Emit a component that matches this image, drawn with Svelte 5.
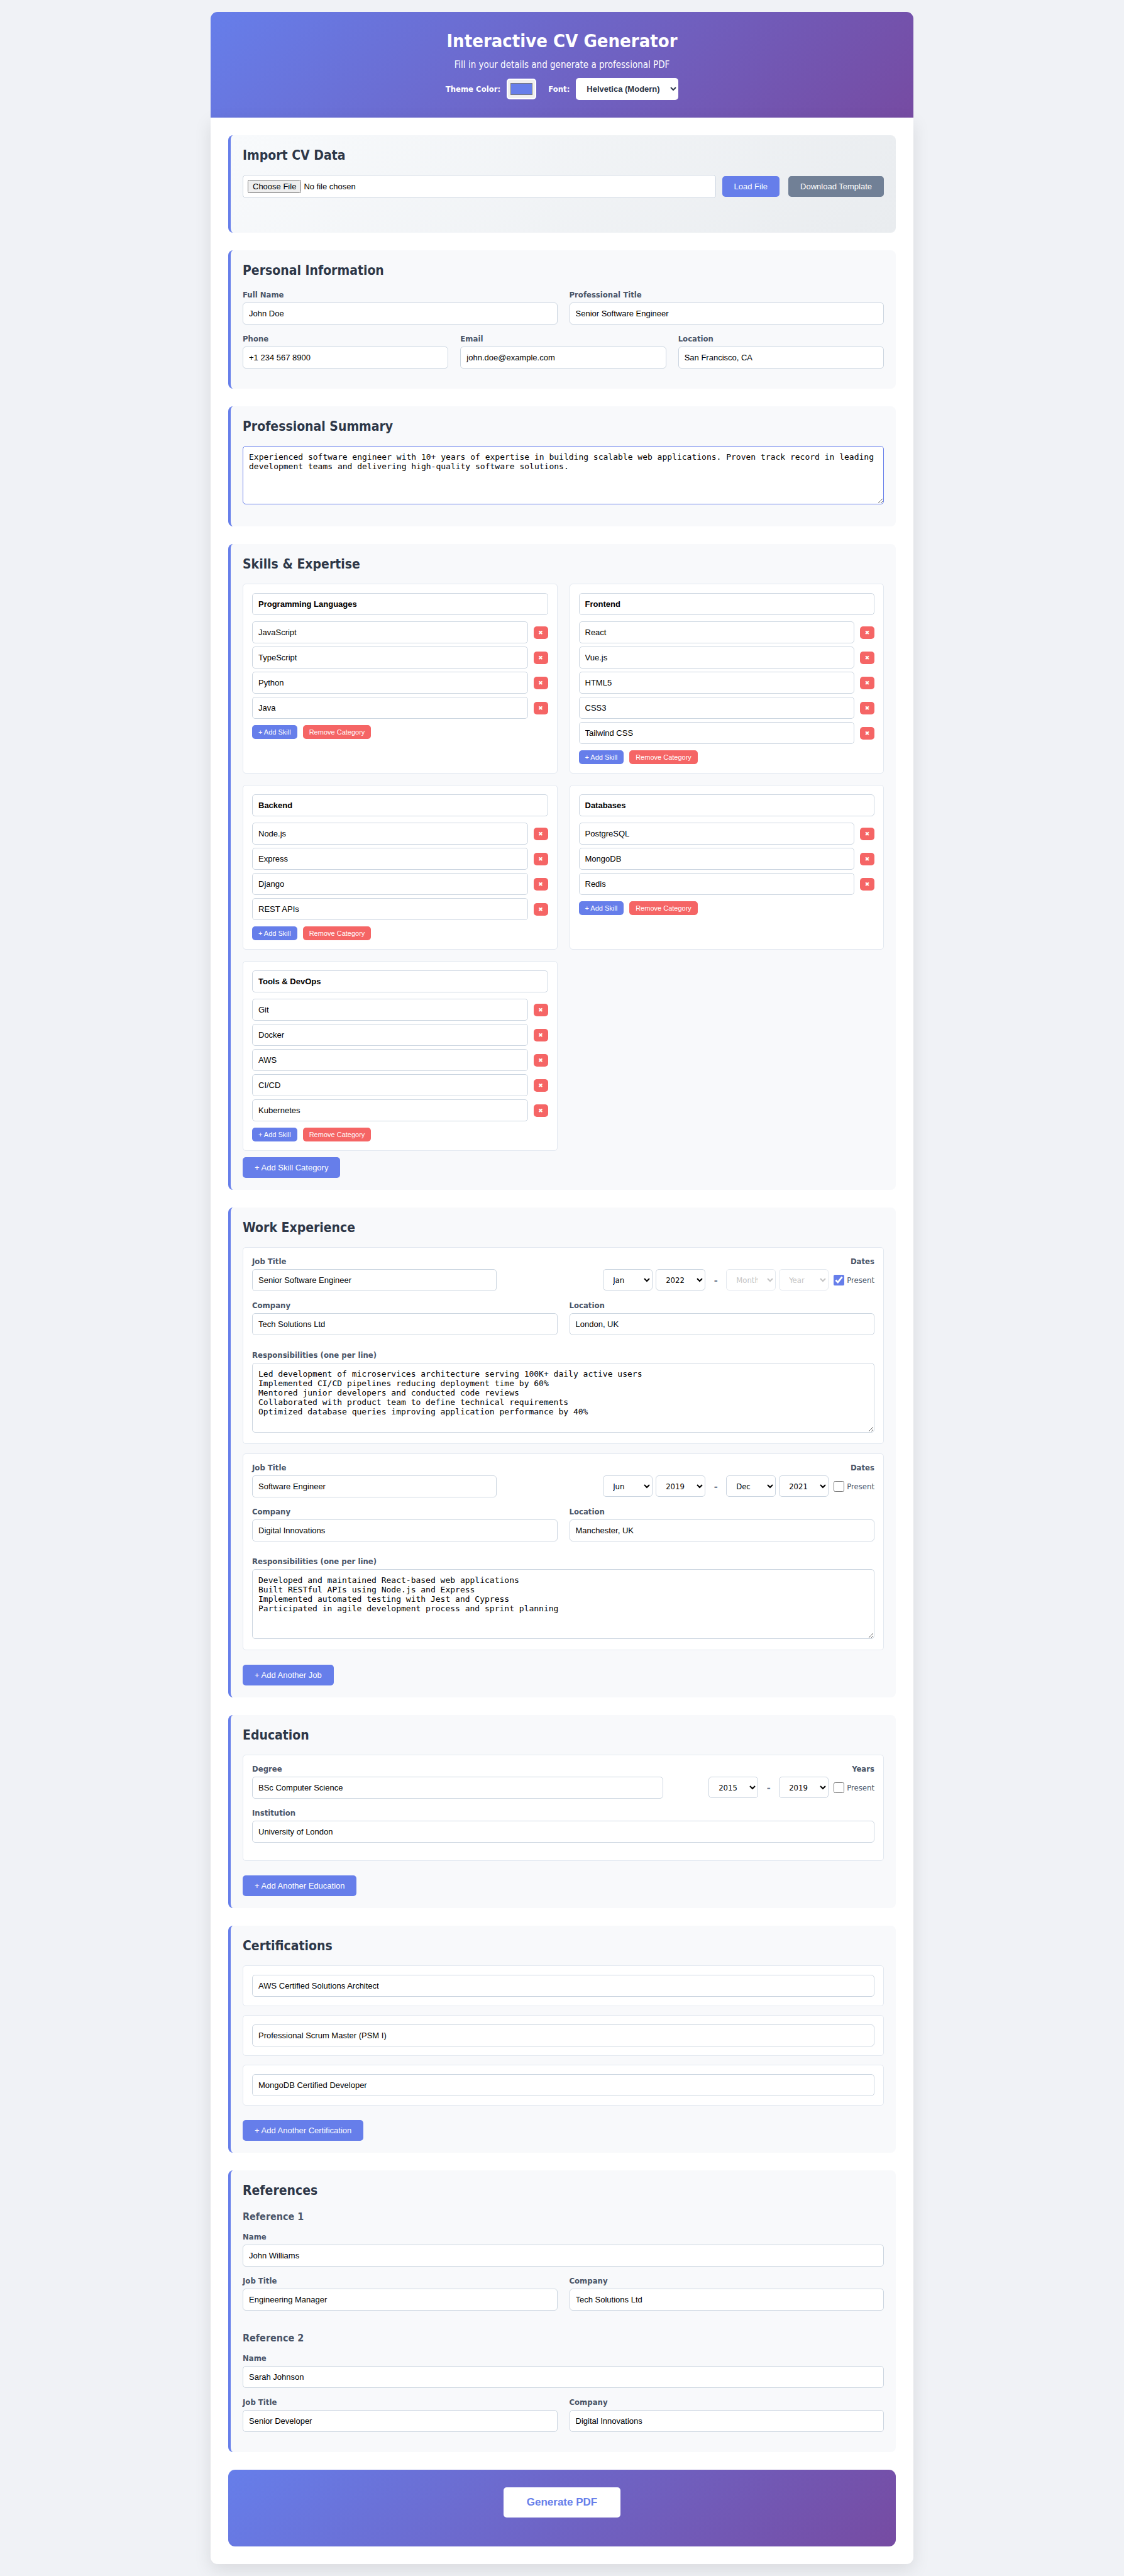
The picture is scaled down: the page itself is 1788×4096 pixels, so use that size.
<script>
  const months = ['Month', 'Jan', 'Feb', 'Mar', 'Apr', 'May', 'Jun', 'Jul', 'Aug', 'Sep', 'Oct', 'Nov', 'Dec'];
  const years = ['Year', ...Array.from({ length: 20 }, (_, i) => String(2025 - i))];

  let themeColor = $state('#667eea');
  let font = $state('Helvetica (Modern)');

  let summary = $state(
    'Experienced software engineer with 10+ years of expertise in building scalable web applications. Proven track record in leading development teams and delivering high-quality software solutions.'
  );

  let personal = $state([
    { id: 'name', label: 'Full Name', value: 'John Doe' },
    { id: 'title', label: 'Professional Title', value: 'Senior Software Engineer' }
  ]);
  let contact = $state([
    { id: 'phone', label: 'Phone', value: '+1 234 567 8900' },
    { id: 'email', label: 'Email', value: 'john.doe@example.com' },
    { id: 'location', label: 'Location', value: 'San Francisco, CA' }
  ]);

  let categories = $state([
    { name: 'Programming Languages', skills: ['JavaScript', 'TypeScript', 'Python', 'Java'] },
    { name: 'Frontend', skills: ['React', 'Vue.js', 'HTML5', 'CSS3', 'Tailwind CSS'] },
    { name: 'Backend', skills: ['Node.js', 'Express', 'Django', 'REST APIs'] },
    { name: 'Databases', skills: ['PostgreSQL', 'MongoDB', 'Redis'] },
    { name: 'Tools & DevOps', skills: ['Git', 'Docker', 'AWS', 'CI/CD', 'Kubernetes'] }
  ]);

  let jobs = $state([
    {
      title: 'Senior Software Engineer',
      company: 'Tech Solutions Ltd',
      location: 'London, UK',
      from: ['Jan', '2022'],
      to: ['Month', 'Year'],
      present: true,
      duties:
        'Led development of microservices architecture serving 100K+ daily active users\nImplemented CI/CD pipelines reducing deployment time by 60%\nMentored junior developers and conducted code reviews\nCollaborated with product team to define technical requirements\nOptimized database queries improving application performance by 40%'
    },
    {
      title: 'Software Engineer',
      company: 'Digital Innovations',
      location: 'Manchester, UK',
      from: ['Jun', '2019'],
      to: ['Dec', '2021'],
      present: false,
      duties:
        'Developed and maintained React-based web applications\nBuilt RESTful APIs using Node.js and Express\nImplemented automated testing with Jest and Cypress\nParticipated in agile development process and sprint planning'
    }
  ]);

  let education = $state([
    { degree: 'BSc Computer Science', institution: 'University of London', from: '2015', to: '2019', present: false }
  ]);

  let certifications = $state([
    'AWS Certified Solutions Architect',
    'Professional Scrum Master (PSM I)',
    'MongoDB Certified Developer'
  ]);

  let references = $state([
    { name: 'John Williams', title: 'Engineering Manager', company: 'Tech Solutions Ltd' },
    { name: 'Sarah Johnson', title: 'Senior Developer', company: 'Digital Innovations' }
  ]);

  const addJob = () =>
    jobs.push({ title: '', company: '', location: '', from: ['Month', 'Year'], to: ['Month', 'Year'], present: false, duties: '' });
  const addEducation = () =>
    education.push({ degree: '', institution: '', from: 'Year', to: 'Year', present: false });
</script>

{#snippet options(list)}
  {#each list as item}<option>{item}</option>{/each}
{/snippet}

<div class="page">
  <header class="header">
    <h1>Interactive CV Generator</h1>
    <p>Fill in your details and generate a professional PDF</p>
    <div class="controls">
      <label for="theme">Theme Color:</label>
      <input id="theme" class="swatch" type="color" bind:value={themeColor} />
      <label for="font">Font:</label>
      <select id="font" class="font-select" bind:value={font}>
        <option>Helvetica (Modern)</option>
        <option>Times (Classic)</option>
        <option>Courier (Mono)</option>
      </select>
    </div>
  </header>

  <main class="content">
    <section class="section import">
      <h2>Import CV Data</h2>
      <div class="import-row">
        <input class="file" type="file" aria-label="CV data file" />
        <button class="btn" type="button">Load File</button>
        <button class="btn muted" type="button">Download Template</button>
      </div>
      <div class="status" aria-live="polite"></div>
    </section>

    <section class="section">
      <h2>Personal Information</h2>
      <div class="fields">
        <div class="row two">
          {#each personal as f}
            <div class="field">
              <label for={f.id}>{f.label}</label>
              <input id={f.id} class="text" type="text" bind:value={f.value} />
            </div>
          {/each}
        </div>
        <div class="row three">
          {#each contact as f}
            <div class="field">
              <label for={f.id}>{f.label}</label>
              <input id={f.id} class="text" type="text" bind:value={f.value} />
            </div>
          {/each}
        </div>
      </div>
    </section>

    <section class="section">
      <h2>Professional Summary</h2>
      <textarea class="area summary" aria-label="Professional Summary" bind:value={summary}></textarea>
    </section>

    <section class="section">
      <h2>Skills &amp; Expertise</h2>
      <div class="skills">
        {#each categories as category, c}
          <div class="card category">
            <input class="text strong" type="text" aria-label="Category name" bind:value={category.name} />
            <div class="skill-list">
              {#each category.skills as _, s}
                <div class="skill">
                  <input class="text" type="text" aria-label="Skill" bind:value={category.skills[s]} />
                  <button class="btn tiny danger" type="button" aria-label="Remove skill" onclick={() => category.skills.splice(s, 1)}>✖</button>
                </div>
              {/each}
            </div>
            <div class="category-actions">
              <button class="btn small" type="button" onclick={() => category.skills.push('')}>+ Add Skill</button>
              <button class="btn small danger" type="button" onclick={() => categories.splice(c, 1)}>Remove Category</button>
            </div>
          </div>
        {/each}
      </div>
      <button class="btn after-skills" type="button" onclick={() => categories.push({ name: '', skills: [''] })}>+ Add Skill Category</button>
    </section>

    <section class="section">
      <h2>Work Experience</h2>
      <div class="cards jobs">
        {#each jobs as job, j}
          <div class="card">
            <div class="fields">
              <div class="row job-head">
                <div class="field">
                  <label for="job-title-{j}">Job Title</label>
                  <input id="job-title-{j}" class="text" type="text" bind:value={job.title} />
                </div>
                <div class="field right" role="group" aria-labelledby="job-dates-{j}">
                  <span class="label" id="job-dates-{j}">Dates</span>
                  <div class="dates">
                    <select aria-label="Start month" bind:value={job.from[0]}>{@render options(months)}</select>
                    <select aria-label="Start year" bind:value={job.from[1]}>{@render options(years)}</select>
                    <span class="dash">-</span>
                    <select aria-label="End month" disabled={job.present} bind:value={job.to[0]}>{@render options(months)}</select>
                    <select aria-label="End year" disabled={job.present} bind:value={job.to[1]}>{@render options(years)}</select>
                    <label class="present"><input type="checkbox" bind:checked={job.present} />Present</label>
                  </div>
                </div>
              </div>
              <div class="row two">
                <div class="field">
                  <label for="job-company-{j}">Company</label>
                  <input id="job-company-{j}" class="text" type="text" bind:value={job.company} />
                </div>
                <div class="field">
                  <label for="job-location-{j}">Location</label>
                  <input id="job-location-{j}" class="text" type="text" bind:value={job.location} />
                </div>
              </div>
            </div>
            <div class="field duties">
              <label for="job-duties-{j}">Responsibilities (one per line)</label>
              <textarea id="job-duties-{j}" class="area" bind:value={job.duties}></textarea>
            </div>
          </div>
        {/each}
      </div>
      <button class="btn after-cards" type="button" onclick={addJob}>+ Add Another Job</button>
    </section>

    <section class="section">
      <h2>Education</h2>
      <div class="cards">
        {#each education as school, e}
          <div class="card">
            <div class="fields">
              <div class="row school-head">
                <div class="field">
                  <label for="degree-{e}">Degree</label>
                  <input id="degree-{e}" class="text" type="text" bind:value={school.degree} />
                </div>
                <div class="field right" role="group" aria-labelledby="school-years-{e}">
                  <span class="label" id="school-years-{e}">Years</span>
                  <div class="dates">
                    <select aria-label="Start year" bind:value={school.from}>{@render options(years)}</select>
                    <span class="dash">-</span>
                    <select aria-label="End year" disabled={school.present} bind:value={school.to}>{@render options(years)}</select>
                    <label class="present"><input type="checkbox" bind:checked={school.present} />Present</label>
                  </div>
                </div>
              </div>
              <div class="field">
                <label for="institution-{e}">Institution</label>
                <input id="institution-{e}" class="text" type="text" bind:value={school.institution} />
              </div>
            </div>
          </div>
        {/each}
      </div>
      <button class="btn after-cards" type="button" onclick={addEducation}>+ Add Another Education</button>
    </section>

    <section class="section">
      <h2>Certifications</h2>
      <div class="cards">
        {#each certifications as _, i}
          <div class="card">
            <input class="text" type="text" aria-label="Certification" bind:value={certifications[i]} />
          </div>
        {/each}
      </div>
      <button class="btn after-cards" type="button" onclick={() => certifications.push('')}>+ Add Another Certification</button>
    </section>

    <section class="section">
      <h2>References</h2>
      <div class="references">
        {#each references as ref, r}
          <div>
            <h3>Reference {r + 1}</h3>
            <div class="fields">
              <div class="field">
                <label for="ref-name-{r}">Name</label>
                <input id="ref-name-{r}" class="text" type="text" bind:value={ref.name} />
              </div>
              <div class="row two">
                <div class="field">
                  <label for="ref-title-{r}">Job Title</label>
                  <input id="ref-title-{r}" class="text" type="text" bind:value={ref.title} />
                </div>
                <div class="field">
                  <label for="ref-company-{r}">Company</label>
                  <input id="ref-company-{r}" class="text" type="text" bind:value={ref.company} />
                </div>
              </div>
            </div>
          </div>
        {/each}
      </div>
    </section>

    <div class="generate">
      <button type="button">Generate PDF</button>
    </div>
  </main>
</div>

<style>
  :global(body) {
    background: #f0f2f6;
    font-family: Tahoma, 'DejaVu Sans Condensed', 'DejaVu Sans', sans-serif;
    color: #2d3748;
  }

  * {
    box-sizing: border-box;
  }

  h1,
  h2,
  h3,
  p {
    margin: 0;
  }

  button,
  input,
  select,
  textarea {
    margin: 0;
    font-family: Arial, 'Liberation Sans', sans-serif;
    font-size: 13px;
  }

  .page {
    max-width: 1118px;
    margin: 0 auto;
    padding: 19px 0;
  }

  .header {
    display: flex;
    flex-direction: column;
    align-items: center;
    padding: 28px;
    border-radius: 11px 11px 0 0;
    background: linear-gradient(135deg, #667eea 0%, #764ba2 100%);
    color: #fff;
  }

  .header h1 {
    font-size: 29px;
    line-height: 37px;
  }

  .header p {
    margin: 9px 0 11px;
    font-size: 15px;
    line-height: 20px;
  }

  .controls {
    display: flex;
    align-items: center;
    gap: 10px;
    font-size: 13px;
    font-weight: 700;
  }

  .swatch {
    width: 47px;
    height: 33px;
    margin-right: 9px;
    border: 2px solid #fff;
    border-radius: 5px;
  }

  .font-select {
    width: 163px;
    height: 35px;
    padding: 0 13px;
    border: 0;
    border-radius: 5px;
    background-color: #fff;
    color: #2d3748;
    font-weight: 700;
  }

  .content {
    display: flex;
    flex-direction: column;
    gap: 28px;
    padding: 28px;
    border-radius: 0 0 11px 11px;
    background: #fff;
    box-shadow: 0 9px 28px rgba(0, 0, 0, 0.1);
  }

  .section {
    padding: 19px;
    border-left: 4px solid #667eea;
    border-radius: 8px;
    background: #f8f9fb;
  }

  .section h2 {
    margin-bottom: 18px;
    font-size: 21px;
    line-height: 26px;
  }

  .section h3 {
    margin-bottom: 14px;
    color: #4a5568;
    font-size: 16px;
    line-height: 21px;
  }

  .import {
    background: linear-gradient(135deg, #f8fafc 0%, #e9ecef 100%);
  }

  .import-row {
    display: flex;
    align-items: center;
    gap: 10px;
  }

  .file {
    flex: 1;
    min-width: 0;
    height: 37px;
    padding: 7px;
    border: 1px solid #cbd5e0;
    border-radius: 5px;
    background: #fff;
    color: #000;
  }

  .status {
    height: 36px;
  }

  .fields {
    display: flex;
    flex-direction: column;
    gap: 15px;
    margin-bottom: 13px;
  }

  .card .fields {
    margin-bottom: 14px;
  }

  .row {
    display: grid;
    gap: 19px;
  }

  .two {
    grid-template-columns: repeat(2, minmax(0, 1fr));
  }

  .three {
    grid-template-columns: repeat(3, minmax(0, 1fr));
  }

  .row.job-head,
  .row.school-head {
    gap: 0;
  }

  .job-head {
    grid-template-columns: 389fr 601fr;
  }

  .school-head {
    grid-template-columns: 654fr 336fr;
  }

  .field {
    display: flex;
    flex-direction: column;
    gap: 4px;
    min-width: 0;
  }

  .field > label,
  .label {
    color: #4a5568;
    font-size: 13px;
    font-weight: 700;
    line-height: 16px;
  }

  .right {
    align-items: flex-end;
  }

  .text {
    width: 100%;
    height: 35px;
    padding: 0 9px;
    border: 1px solid #cbd5e0;
    border-radius: 5px;
    background: #fff;
    color: #000;
  }

  .strong {
    font-weight: 700;
  }

  .area {
    display: block;
    width: 100%;
    height: 111px;
    padding: 9px;
    border: 1px solid #cbd5e0;
    border-radius: 5px;
    background: #fff;
    color: #000;
    font-family: 'DejaVu Sans Mono', monospace;
    line-height: 15px;
    resize: vertical;
  }

  .summary {
    height: 93px;
    margin-bottom: 16px;
    border-color: #667eea;
  }

  .btn {
    display: block;
    flex: none;
    height: 33px;
    padding: 0 19px;
    border: 0;
    border-radius: 5px;
    background: #667eea;
    color: #fff;
    white-space: nowrap;
  }

  .btn.muted {
    margin-left: 4px;
    background: #718096;
  }

  .btn.small {
    height: 22px;
    padding: 0 10px;
    font-size: 11px;
  }

  .btn.tiny {
    width: 23px;
    height: 20px;
    padding: 0;
    font-family: 'DejaVu Sans', sans-serif;
    font-size: 9px;
  }

  .btn.danger {
    background: #f56565;
  }

  .btn.after-skills {
    margin-top: 10px;
  }

  .btn.after-cards {
    margin-top: 23px;
  }

  .card {
    padding: 14px;
    border: 1px solid #e2e8f0;
    border-radius: 5px;
    background: #fff;
  }

  .cards {
    display: flex;
    flex-direction: column;
    gap: 14px;
  }

  .cards.jobs {
    gap: 15px;
  }

  .skills {
    display: grid;
    grid-template-columns: repeat(2, minmax(0, 1fr));
    gap: 18px 19px;
  }

  .category {
    display: flex;
    flex-direction: column;
    gap: 10px;
  }

  .skill-list {
    display: flex;
    flex-direction: column;
    gap: 5px;
  }

  .skill,
  .category-actions {
    display: flex;
    align-items: center;
    gap: 9px;
  }

  .dates {
    display: flex;
    align-items: center;
    gap: 5px;
  }

  .dates select {
    width: 79px;
    height: 34px;
    padding: 0 11px;
    border: 1px solid #cbd5e0;
    border-radius: 5px;
    background-color: #fff;
    color: #000;
    font-family: inherit;
  }

  .dates select:disabled {
    color: #888;
    opacity: 0.5;
  }

  .dash {
    width: 23px;
    color: #718096;
    font-size: 16px;
    font-weight: 700;
    text-align: center;
  }

  .present {
    display: flex;
    align-items: center;
    gap: 4px;
    margin-left: 3px;
    color: #4a5568;
    font-size: 13px;
  }

  .present input {
    width: 17px;
    height: 17px;
    accent-color: #667eea;
  }

  .card .fields:has(+ .duties) {
    margin-bottom: 24px;
  }

  .duties {
    margin-bottom: 3px;
  }

  .references {
    display: flex;
    flex-direction: column;
    gap: 20px;
  }

  .generate {
    display: flex;
    justify-content: center;
    padding: 28px 28px 46px;
    border-radius: 11px;
    background: linear-gradient(135deg, #667eea 0%, #764ba2 100%);
  }

  .generate button {
    height: 48px;
    padding: 0 37px;
    border: 0;
    border-radius: 5px;
    background: #fff;
    color: #667eea;
    font-size: 17px;
    font-weight: 700;
  }
</style>
